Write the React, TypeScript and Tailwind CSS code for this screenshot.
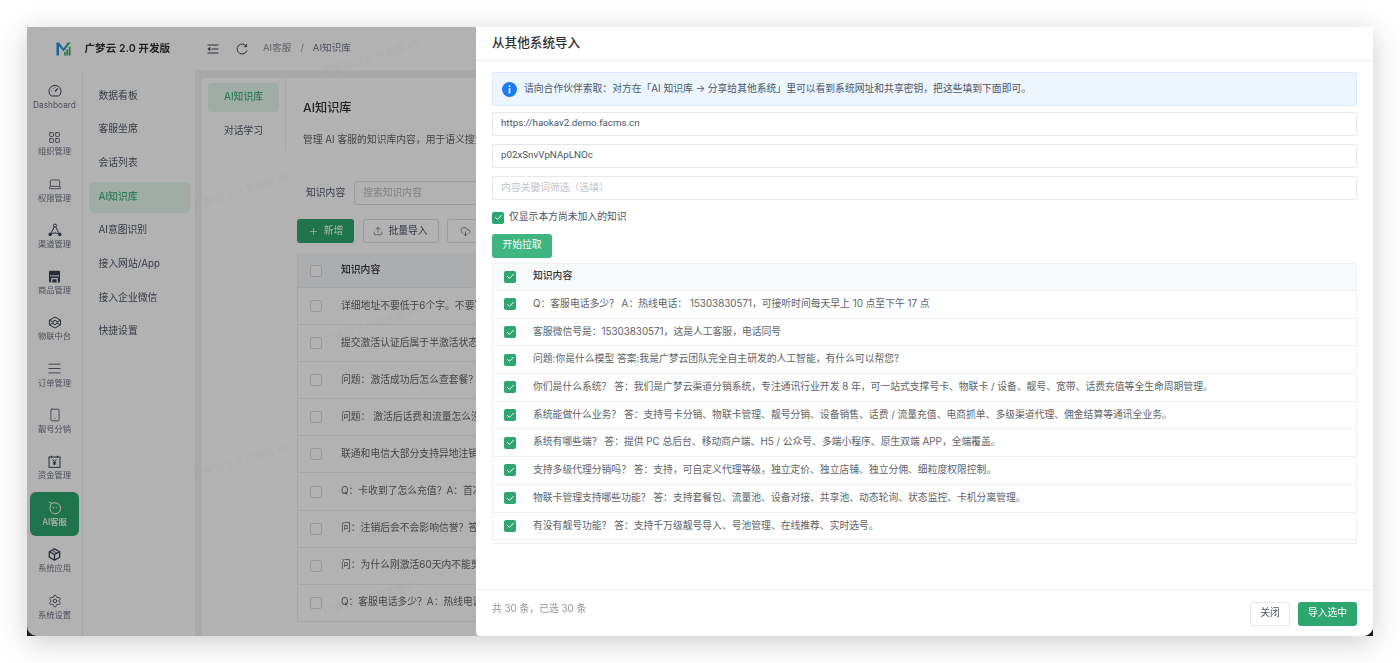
import React from "react";
import { LayoutGrid, Laptop, AlignJustify, Smartphone, Settings, Plus, Upload, CloudDownload, Check } from "lucide-react";

const font = { fontFamily: 'Inter, "Noto Sans CJK SC", "Noto Sans", sans-serif' };
const latin = { fontFamily: 'Roboto, "Noto Sans CJK SC", sans-serif' };

const Logo = () => (
  <svg width="15" height="14" viewBox="0 0 15 14">
    <defs>
      <linearGradient id="g" x1="0" x2="1" y1="0" y2="0">
        <stop offset="0" stopColor="#1d8fe0" />
        <stop offset="0.55" stopColor="#1d9ac0" />
        <stop offset="1" stopColor="#35a853" />
      </linearGradient>
    </defs>
    <path d="M0.5 0.5 L3.2 0.5 L7.5 6.5 L11.8 0.5 L14.5 0.5 L7.5 9.5 L3 4 L3 13.5 L0.5 13.5 Z" fill="url(#g)" />
    <rect x="8.2" y="10" width="1.6" height="3.5" fill="#35a853" />
    <rect x="10.4" y="7.5" width="1.6" height="6" fill="#35a853" />
    <rect x="12.8" y="4.5" width="1.7" height="9" fill="#35a853" />
  </svg>
);

const GaugeIcon = () => (
  <svg width="14" height="14" viewBox="0 0 14 14" fill="none" stroke="currentColor" strokeWidth="1">
    <path d="M3.2 12 A6 6 0 1 1 10.8 12 Z" />
    <path d="M7 7.5 L9.8 4.3" strokeWidth="1.2" />
    <path d="M3.4 7 H4.4 M4.8 4 L5.4 4.7 M7 2.8 V3.8" strokeWidth="0.8" />
  </svg>
);

const NetworkIcon = () => (
  <svg width="14" height="14" viewBox="0 0 14 14" fill="none" stroke="currentColor" strokeWidth="1">
    <circle cx="7" cy="2.6" r="1.5" />
    <circle cx="2.2" cy="11.4" r="1.3" fill="currentColor" />
    <circle cx="11.8" cy="11.4" r="1.3" fill="currentColor" />
    <path d="M6.2 4 L3 10.2 M7.8 4 L11 10.2 M3.4 11.2 C5.5 9.4 8.5 9.4 10.6 11.2" />
  </svg>
);

const StoreIcon = () => (
  <svg width="13" height="13" viewBox="0 0 13 13">
    <rect x="1" y="0.8" width="11" height="11.6" rx="0.8" fill="currentColor" />
    <rect x="2" y="5.4" width="9" height="1" fill="#fff" />
    <path d="M3.2 12.4 V8 H9.8 V12.4 H8.6 V9.2 H4.4 V12.4 Z" fill="#fff" />
  </svg>
);

const IotIcon = () => (
  <svg width="14" height="13" viewBox="0 0 14 13" fill="none" stroke="currentColor" strokeWidth="1">
    <path d="M7 1 L12.6 4.2 V8.8 L7 12 L1.4 8.8 V4.2 Z" />
    <circle cx="7" cy="6.5" r="2.1" />
    <path d="M1.4 4.2 L4.9 6 M12.6 4.2 L9.1 6 M1.4 8.8 L4.9 7 M12.6 8.8 L9.1 7" />
  </svg>
);

const YenIcon = () => (
  <svg width="13" height="13" viewBox="0 0 13 13" fill="none" stroke="currentColor" strokeWidth="1">
    <rect x="1" y="2" width="11" height="10.3" />
    <path d="M3.5 0.6 V3 M9.5 0.6 V3" />
    <path d="M4.6 4.2 L6.5 6.8 L8.4 4.2 M6.5 6.8 V10.2 M4.8 7.4 H8.2 M4.8 8.9 H8.2" strokeWidth="0.9" />
  </svg>
);

const BotIcon = () => (
  <svg width="14" height="14" viewBox="0 0 14 14" fill="none" stroke="currentColor" strokeWidth="1">
    <path d="M3.2 2.6 C4.4 2 5.6 1.8 7 1.8 C10.5 1.8 12.6 4.2 12.6 7.4 C12.6 10.6 10.2 12.8 7.2 12.8 C4.2 12.8 2 10.6 2 7.6 C2 5.8 2.5 4.6 3.2 2.6 Z" />
    <path d="M0.8 1.2 L3.6 2" />
    <path d="M8 6.6 H8.8" />
    <circle cx="5.6" cy="6.6" r="0.4" fill="currentColor" />
  </svg>
);

const CubeIcon = () => (
  <svg width="13" height="13" viewBox="0 0 13 13" fill="none" stroke="currentColor" strokeWidth="1.3">
    <path d="M6.5 0.9 L11.7 3.7 V9.3 L6.5 12.1 L1.3 9.3 V3.7 Z" strokeLinejoin="round" />
    <path d="M1.5 3.8 L6.5 6.6 L11.5 3.8 M6.5 6.6 V12" />
    <path d="M4 2.4 L9 5.2" strokeWidth="0.9" />
  </svg>
);

const CollapseIcon = () => (
  <svg width="12" height="10" viewBox="0 0 12 10" fill="none" stroke="currentColor" strokeWidth="1">
    <path d="M0.5 1 H11.5 M4.5 5 H11.5 M0.5 9 H11.5" />
    <path d="M3 3.2 L0.8 5 L3 6.8 Z" fill="currentColor" strokeWidth="0.5" />
  </svg>
);

const RefreshIcon = () => (
  <svg width="12" height="12" viewBox="0 0 12 12" fill="none" stroke="currentColor" strokeWidth="1">
    <path d="M10.4 3.4 A5 5 0 1 0 10.9 7.4" />
    <path d="M10.6 0.9 V3.7 H7.8" strokeWidth="0.9" />
  </svg>
);

const InfoDot = () => (
  <svg width="15" height="15" viewBox="0 0 15 15" className="shrink-0">
    <circle cx="7.5" cy="7.5" r="7.5" fill="#1d7cf2" />
    <rect x="6.7" y="3.2" width="1.6" height="1.7" rx="0.5" fill="#fff" />
    <rect x="6.7" y="6" width="1.6" height="5.6" rx="0.4" fill="#fff" />
  </svg>
);

const rail: { label: string; icon: React.ReactNode; active?: boolean }[] = [
  { label: "Dashboard", icon: <GaugeIcon /> },
  { label: "组织管理", icon: <LayoutGrid size={13} strokeWidth={1.4} /> },
  { label: "权限管理", icon: <Laptop size={14} strokeWidth={1.3} /> },
  { label: "渠道管理", icon: <NetworkIcon /> },
  { label: "商品管理", icon: <StoreIcon /> },
  { label: "物联中台", icon: <IotIcon /> },
  { label: "订单管理", icon: <AlignJustify size={15} strokeWidth={1.3} /> },
  { label: "靓号分销", icon: <Smartphone size={14} strokeWidth={1.3} /> },
  { label: "资金管理", icon: <YenIcon /> },
  { label: "AI客服", icon: <BotIcon />, active: true },
  { label: "系统应用", icon: <CubeIcon /> },
  { label: "系统设置", icon: <Settings size={14} strokeWidth={1.4} /> },
];

const menu = ["数据看板", "客服坐席", "会话列表", "AI知识库", "AI意图识别", "接入网站/App", "接入企业微信", "快捷设置"];

const bgRows = [
  "详细地址不要低于6个字。不要写错地址信息，否则无法正常发货配送",
  "提交激活认证后属于半激活状态，请耐心等待审核",
  "问题：激活成功后怎么查套餐？ 答案：关注公众号即可查询",
  "问题： 激活后话费和流量怎么没有到账",
  "联通和电信大部分支持异地注销，移动需要本地",
  "Q：卡收到了怎么充值？A：首次充值请前往公众号",
  "问：注销后会不会影响信誉？答：不会影响",
  "问：为什么刚激活60天内不能剪卡注销",
  "Q：客服电话多少？A：热线电话： 15303830571",
];

const rows = [
  "Q：客服电话多少？ A：热线电话： 15303830571，可接听时间每天早上 10 点至下午 17 点",
  "客服微信号是：15303830571，这是人工客服，电话同号",
  "问题:你是什么模型 答案:我是广梦云团队完全自主研发的人工智能，有什么可以帮您?",
  "你们是什么系统？ 答：我们是广梦云渠道分销系统，专注通讯行业开发 8 年，可一站式支撑号卡、物联卡 / 设备、靓号、宽带、话费充值等全生命周期管理。",
  "系统能做什么业务？ 答：支持号卡分销、物联卡管理、靓号分销、设备销售、话费 / 流量充值、电商抓单、多级渠道代理、佣金结算等通讯全业务。",
  "系统有哪些端？ 答：提供 PC 总后台、移动商户端、H5 / 公众号、多端小程序、原生双端 APP，全端覆盖。",
  "支持多级代理分销吗？ 答：支持，可自定义代理等级，独立定价、独立店铺、独立分佣、细粒度权限控制。",
  "物联卡管理支持哪些功能？ 答：支持套餐包、流量池、设备对接、共享池、动态轮询、状态监控、卡机分离管理。",
  "有没有靓号功能？ 答：支持千万级靓号导入、号池管理、在线推荐、实时选号。",
  "",
];

const marks = [
  [322, 50],
  [322, 318],
  [322, 590],
  [192, 184],
  [192, 454],
];

const GreenCheck = () => (
  <span className="flex h-3 w-3 shrink-0 items-center justify-center rounded-[2px] bg-[#2ea66f]">
    <Check size={9} strokeWidth={2.6} className="text-white" />
  </span>
);

export default function App() {
  return (
    <div style={font} className="h-[663px] w-[1400px] overflow-hidden bg-white pl-[27px] pt-[27px] text-[9.8px] text-[#606266]">
      <div className="h-[609px] w-[1346px] bg-[#1a1a1a] shadow-[0_6px_28px_rgba(0,0,0,0.2)] blur-[0.3px]">
        <div className="relative flex h-full w-full overflow-hidden rounded-b-[10px] bg-white">
          {/* left navigation */}
          <div className="flex w-[168px] shrink-0 flex-col">
            <div className="flex h-[43px] shrink-0 items-center pl-[29px]">
              <Logo />
              <span className="ml-[13.5px] text-[10.6px] font-semibold text-[#303133]">广梦云 2.0 开发版</span>
            </div>
            <div className="flex flex-1">
              <div className="flex w-[56px] shrink-0 flex-col items-center gap-[2.33px] border-r border-[#ebeef0] pt-[5.5px]">
                {rail.map((r) => (
                  <div
                    key={r.label}
                    className={
                      "flex h-[44px] w-[49px] shrink-0 flex-col items-center justify-center gap-[2px] rounded-[6px] text-[8.3px] leading-[11px] " +
                      (r.active ? "bg-[#2ea66f] font-medium text-white" : "text-[#6b7280]")
                    }
                  >
                    <span className={r.active ? "text-white" : "text-[#374151]"}>{r.icon}</span>
                    <span>{r.label}</span>
                  </div>
                ))}
              </div>
              <div className="flex flex-1 flex-col gap-[2.7px] px-[5.5px] pt-[10.5px]">
                {menu.map((m) => (
                  <div
                    key={m}
                    className={
                      "flex h-[31px] items-center rounded-[5px] pl-[10px] text-[9.8px] " +
                      (m === "AI知识库" ? "bg-[#e6f6ee] font-medium text-[#3cb27d]" : "text-[#4b5563]")
                    }
                  >
                    {m}
                  </div>
                ))}
              </div>
            </div>
          </div>

          {/* right main */}
          <div className="flex min-w-0 flex-1 flex-col">
            <div className="flex h-[43px] shrink-0 items-center pl-[12px] text-[#374151]">
              <CollapseIcon />
              <span className="ml-[17px]"><RefreshIcon /></span>
              <span className="ml-[15px] text-[9.6px] text-[#8a8f98]">AI客服</span>
              <span className="mx-[9px] text-[9.6px] text-[#8a8f98]">/</span>
              <span className="text-[9.6px] text-[#6b7280]">AI知识库</span>
            </div>
            <div className="flex min-h-0 flex-1 bg-[#f1f3f5] pl-[7px] pt-[8px]">
              <div className="flex min-w-0 flex-1 bg-white">
                <div className="flex h-[72px] w-[84px] shrink-0 flex-col gap-[4px] border-r border-[#ebeef0] px-[6px] pt-[5px]">
                  <div className="flex h-[29px] shrink-0 items-center justify-center rounded-[4px] bg-[#e6f6ee] text-[9.8px] font-medium text-[#3cb27d]">AI知识库</div>
                  <div className="flex h-[30px] shrink-0 items-center justify-center text-[9.8px] text-[#4b5563]">对话学习</div>
                </div>
                <div className="min-w-0 flex-1 pl-[11px]">
                  <div className="ml-[6px] mt-[21px] text-[12.2px] font-medium leading-[18px] text-[#303133]">AI知识库</div>
                  <div className="ml-[6px] mt-[16px] whitespace-nowrap text-[9.8px] leading-[14px] text-[#606266]">管理 AI 客服的知识库内容，用于语义搜索和智能回复</div>
                  <div className="ml-[9px] mt-[34px] flex h-[24px] items-center">
                    <span className="text-[9.8px] text-[#4b5563]">知识内容</span>
                    <span className="ml-[9px] flex h-[24px] w-[300px] shrink-0 items-center rounded-[3px] border border-[#dcdfe6] pl-[8px] text-[9.8px] text-[#b6bac2]">搜索知识内容</span>
                  </div>
                  <div className="mt-[14px] flex h-[24px] gap-[8.5px]">
                    <span className="flex w-[57px] items-center justify-center gap-[5px] rounded-[3px] bg-[#2ea66f] text-[9.8px] text-white">
                      <Plus size={11} strokeWidth={1.6} />
                      新增
                    </span>
                    <span className="flex w-[76px] items-center justify-center gap-[5px] rounded-[3px] border border-[#dcdfe6] text-[9.8px] text-[#4b5563]">
                      <Upload size={10} strokeWidth={1.5} />
                      批量导入
                    </span>
                    <span className="flex w-[90px] items-center justify-center gap-[5px] rounded-[3px] border border-[#dcdfe6] text-[9.8px] text-[#4b5563]">
                      <CloudDownload size={11} strokeWidth={1.5} />
                      从其他系统
                    </span>
                  </div>
                  <div className="mt-[10px] border-l border-[#ebeef0]">
                    <div className="flex h-[35px] items-center border-b border-[#ebeef0] bg-[#f7f8fa] pl-[12px] pt-[1px]">
                      <span className="h-3 w-3 shrink-0 rounded-[2px] border border-[#d4d7dd] bg-white" />
                      <span className="ml-[19px] text-[9.8px] font-medium text-[#303133]">知识内容</span>
                    </div>
                    {bgRows.map((t) => (
                      <div key={t} className="flex h-[37.1px] items-center whitespace-nowrap border-b border-[#ebeef0] pl-[12px]">
                        <span className="h-3 w-3 shrink-0 rounded-[2px] border border-[#d4d7dd] bg-white" />
                        <span className="ml-[19px] text-[9.8px] text-[#606266]">{t}</span>
                      </div>
                    ))}
                  </div>
                </div>
              </div>
            </div>
          </div>

          {/* watermarks */}
          {marks.map(([x, y]) => (
            <span
              key={x + "-" + y}
              style={{ left: x - 27, top: y - 27 }}
              className="absolute -rotate-[17deg] whitespace-nowrap text-[10.5px] text-black/[0.035]"
            >
              广梦云 2.0 开发版 #1
            </span>
          ))}

          {/* dimming overlay */}
          <div className="absolute inset-0 bg-black/30" />

          {/* drawer */}
          <div className="absolute bottom-0 right-0 top-0 flex w-[897px] flex-col rounded-bl-[4px] bg-white">
            <div className="flex h-[34px] shrink-0 items-center border-b border-[#f0f1f3] pb-[1px] pl-[16px] text-[12.6px] font-medium text-[#303133]">从其他系统导入</div>
            <div className="flex flex-1 flex-col px-[16px] pt-[11px]">
              <div className="flex h-[34px] shrink-0 items-center rounded-[2px] border border-[#dbeafe] bg-[#edf5ff] pl-[9px] text-[9.8px] text-[#4b5563]">
                <InfoDot />
                <span className="ml-[7px]">请向合作伙伴索取：对方在「AI 知识库 → 分享给其他系统」里可以看到系统网址和共享密钥，把这些填到下面即可。</span>
              </div>
              <div style={latin} className="mt-[6px] flex h-[24px] shrink-0 items-center rounded-[3px] border border-[#e4e7ec] pb-[1px] pl-[8px] text-[9.75px] text-[#4b5563]">https://haokav2.demo.facms.cn</div>
              <div style={latin} className="mt-[8px] flex h-[24px] shrink-0 items-center rounded-[3px] border border-[#e4e7ec] pb-[1px] pl-[8px] text-[9.75px] text-[#4b5563]">p02xSnvVpNApLNOc</div>
              <div className="mt-[8px] flex h-[24px] shrink-0 items-center rounded-[3px] border border-[#e4e7ec] pl-[8px] text-[#c0c4cc]">内容关键词筛选（选填）</div>
              <div className="mt-[9px] flex h-[17px] shrink-0 items-center gap-[5px]">
                <GreenCheck />
                <span className="text-[#4b5563]">仅显示本方尚未加入的知识</span>
              </div>
              <div className="mt-[7.5px] flex h-[24px] w-[60px] shrink-0 items-center justify-center rounded-[3px] bg-[#3fb580] text-white">开始拉取</div>
              <div className="mt-[5px] h-[281px] shrink-0 overflow-hidden rounded-[3px] border border-[#f0f1f3]">
                <div className="flex h-[27.5px] items-center border-b border-[#eef0f2] bg-[#f8f9fb] pl-[11px]">
                  <GreenCheck />
                  <span className="ml-[17px] font-medium text-[#303133]">知识内容</span>
                </div>
                {rows.map((t, i) => (
                  <div key={i} className="flex h-[27.7px] items-center border-b border-[#eef0f2] pl-[11px]">
                    {t && <GreenCheck />}
                    <span className="ml-[17px] whitespace-nowrap text-[#606266]">{t}</span>
                  </div>
                ))}
              </div>
            </div>
            <div className="flex h-[47.5px] shrink-0 items-start border-t border-[#f0f1f3] px-[16px] pt-[12px]">
              <span className="leading-[14px] text-[#909399]">共 30 条，已选 30 条</span>
              <span className="ml-auto flex h-[24px] w-[40px] items-center justify-center rounded-[3px] border border-[#e4e7ec] text-[#4b5563]">关闭</span>
              <span className="ml-[8px] flex h-[24px] w-[59px] items-center justify-center rounded-[3px] bg-[#2ea66f] text-white">导入选中</span>
            </div>
          </div>
        </div>
      </div>
    </div>
  );
}
